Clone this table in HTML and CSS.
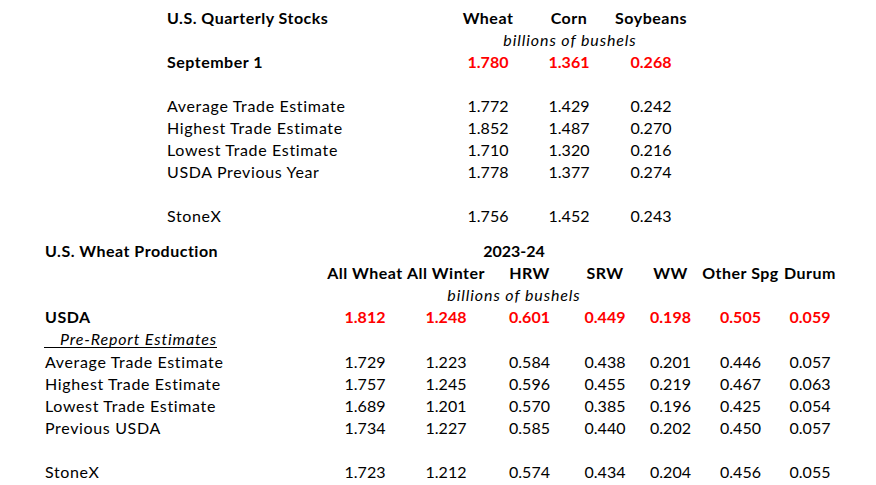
FILE: index.html
```html
<!DOCTYPE html>
<html>
<head>
<meta charset="utf-8">
<link rel="stylesheet" href="styles.css">
</head>
<body>
<div class="page">
  <div class="stocks">
    <div class="b">U.S. Quarterly Stocks</div><div class="c b">Wheat</div><div class="c b">Corn</div><div class="c b">Soybeans</div>
    <div></div><div class="c i span3">billions of bushels</div>
    <div class="b">September 1</div><div class="c n b red">1.780</div><div class="c n b red">1.361</div><div class="c n b red">0.268</div>
    <div class="blank"></div>
    <div>Average Trade Estimate</div><div class="c n">1.772</div><div class="c n">1.429</div><div class="c n">0.242</div>
    <div>Highest Trade Estimate</div><div class="c n">1.852</div><div class="c n">1.487</div><div class="c n">0.270</div>
    <div>Lowest Trade Estimate</div><div class="c n">1.710</div><div class="c n">1.320</div><div class="c n">0.216</div>
    <div>USDA Previous Year</div><div class="c n">1.778</div><div class="c n">1.377</div><div class="c n">0.274</div>
    <div class="blank"></div>
    <div>StoneX</div><div class="c n">1.756</div><div class="c n">1.452</div><div class="c n">0.243</div>
  </div>

  <div class="wheat">
    <div class="b">U.S. Wheat Production</div><div class="c n b span5">2023-24</div><div></div><div></div>
    <div></div><div class="c b">All Wheat</div><div class="c b">All Winter</div><div class="c b">HRW</div><div class="c b">SRW</div><div class="c b">WW</div><div class="c b">Other Spg</div><div class="c b">Durum</div>
    <div></div><div class="c i span5">billions of bushels</div><div></div><div></div>
    <div class="b">USDA</div><div class="c n b red">1.812</div><div class="c n b red">1.248</div><div class="c n b red">0.601</div><div class="c n b red">0.449</div><div class="c n b red">0.198</div><div class="c n b red">0.505</div><div class="c n b red">0.059</div>
    <div class="pre-cell"><span class="pre">Pre-Report Estimates</span></div>
    <div>Average Trade Estimate</div><div class="c n">1.729</div><div class="c n">1.223</div><div class="c n">0.584</div><div class="c n">0.438</div><div class="c n">0.201</div><div class="c n">0.446</div><div class="c n">0.057</div>
    <div>Highest Trade Estimate</div><div class="c n">1.757</div><div class="c n">1.245</div><div class="c n">0.596</div><div class="c n">0.455</div><div class="c n">0.219</div><div class="c n">0.467</div><div class="c n">0.063</div>
    <div>Lowest Trade Estimate</div><div class="c n">1.689</div><div class="c n">1.201</div><div class="c n">0.570</div><div class="c n">0.385</div><div class="c n">0.196</div><div class="c n">0.425</div><div class="c n">0.054</div>
    <div>Previous USDA</div><div class="c n">1.734</div><div class="c n">1.227</div><div class="c n">0.585</div><div class="c n">0.440</div><div class="c n">0.202</div><div class="c n">0.450</div><div class="c n">0.057</div>
    <div class="blank"></div>
    <div>StoneX</div><div class="c n">1.723</div><div class="c n">1.212</div><div class="c n">0.574</div><div class="c n">0.434</div><div class="c n">0.204</div><div class="c n">0.456</div><div class="c n">0.055</div>
  </div>
</div>
</body>
</html>
```
FILE: styles.css
```css
html, body {
  margin: 0;
  padding: 0;
  background: #ffffff;
}
body {
  font-family: Lato, "Open Sans", "DejaVu Sans", sans-serif;
  font-size: 16px;
  color: #000000;
  width: 876px;
  height: 485px;
  overflow: hidden;
}
.page {
  padding-top: 6px;
}
.stocks {
  display: grid;
  grid-template-columns: 280px 82px 80px 84px;
  grid-auto-rows: 22px;
  margin-left: 167px;
  width: 526px;
}
.wheat {
  display: grid;
  grid-template-columns: 280px 80px 82px 85px 66px 65px 75px 64px;
  grid-auto-rows: 22.2px;
  margin-left: 45px;
  margin-top: 13px;
  width: 797px;
}
.stocks > div, .wheat > div {
  display: flex;
  align-items: center;
  white-space: nowrap;
  letter-spacing: 0.65px;
}
.stocks > .b, .wheat > .b {
  letter-spacing: 0.5px;
}
.stocks > .c, .wheat > .c {
  justify-content: center;
}
.stocks > .i, .wheat > .i {
  letter-spacing: 0.9px;
}
.stocks > .n, .wheat > .n {
  letter-spacing: 0;
}
.blank {
  grid-column: 1 / -1;
}
.span3 {
  grid-column: span 3;
}
.span5 {
  grid-column: span 5;
}
.b {
  font-weight: bold;
}
.i {
  font-style: italic;
}
.red {
  color: #ff0000;
}
.wheat > .pre-cell {
  grid-column: 1 / -1;
  margin-left: -1px;
  letter-spacing: 0.85px;
}
.pre {
  font-style: italic;
  padding-left: 16px;
  border-bottom: 1px solid #000000;
  line-height: 17px;
}
```
